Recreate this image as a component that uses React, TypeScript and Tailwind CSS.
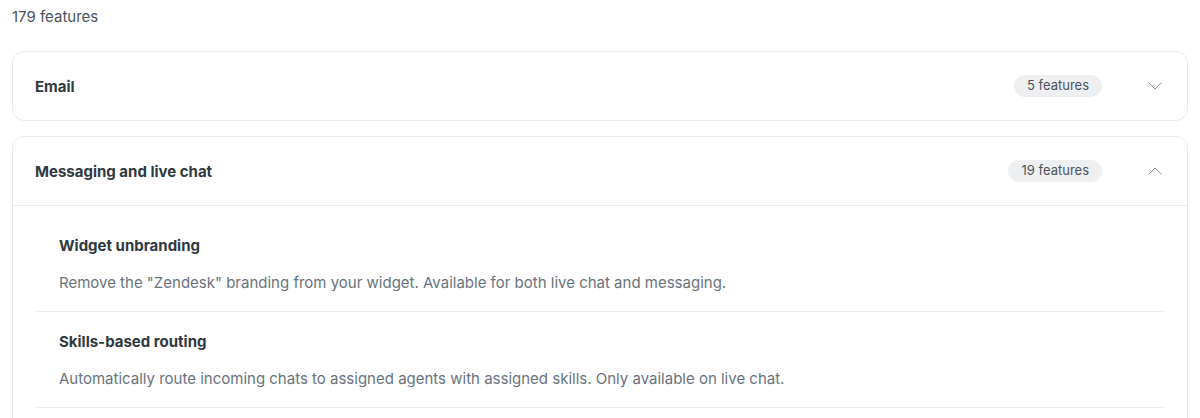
import React from 'react'
import { ChevronDown, ChevronUp } from 'lucide-react'

type Feature = { title: string; description: string }
type Category = { name: string; count: number; open: boolean; features: Feature[] }

const categories: Category[] = [
  { name: 'Email', count: 5, open: false, features: [] },
  {
    name: 'Messaging and live chat',
    count: 19,
    open: true,
    features: [
      {
        title: 'Widget unbranding',
        description:
          'Remove the "Zendesk" branding from your widget. Available for both live chat and messaging.',
      },
      {
        title: 'Skills-based routing',
        description:
          'Automatically route incoming chats to assigned agents with assigned skills. Only available on live chat.',
      },
    ],
  },
]

const CategoryCard: React.FC<{ category: Category }> = ({ category }) => {
  const Icon = category.open ? ChevronUp : ChevronDown
  return (
    <div className="rounded-xl border border-[#e9ebed] bg-white">
      <div
        className={`flex items-center pl-[22px] pr-5 ${category.open ? 'border-b border-[#e9ebed] h-[69px]' : 'h-[68px]'}`}
      >
        <span className="flex-1 pt-px text-[15px] leading-5 font-bold text-[#2f3941]">
          {category.name}
        </span>
        <span className="rounded-full bg-[#eeeff1] px-[13px] h-[22px] flex items-center text-[13px] text-[#49545c]">
          {category.count} features
        </span>
        <Icon className="ml-[41px] w-6 h-6 text-[#87929d]" strokeWidth={1} />
      </div>
      {category.open && (
        <div className="px-[22px] pt-[10px] pb-8">
          {category.features.map((f, idx) => (
            <div key={idx} className="px-6 pt-5 pb-4 border-b border-[#e9ebed]">
              <div className="text-[15px] leading-5 font-bold text-[#2f3941]">{f.title}</div>
              <div className="mt-[15px] text-[15px] leading-6 text-[#68737d]">{f.description}</div>
            </div>
          ))}
        </div>
      )}
    </div>
  )
}

export default function App() {
  return (
    <div className="h-screen overflow-hidden bg-white px-3 pt-[7px] font-['Inter',sans-serif]">
      <div className="text-[15px] leading-5 text-[#49545c]">179 features</div>
      <div className="mt-6 flex flex-col gap-[15px]">
        {categories.map((c) => (
          <CategoryCard key={c.name} category={c} />
        ))}
      </div>
    </div>
  )
}
